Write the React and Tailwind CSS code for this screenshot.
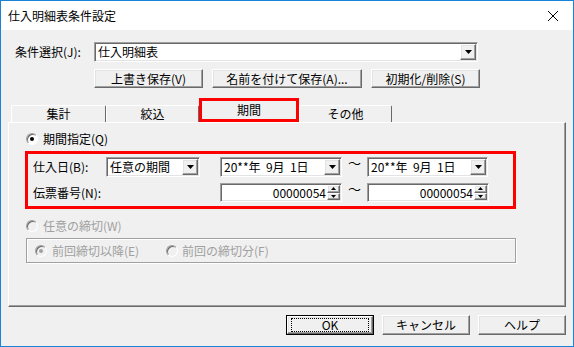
import React from 'react';

const raised = 'bg-[#f0f0f0] border border-t-white border-l-white border-r-[#696969] border-b-[#696969] shadow-[inset_-1px_-1px_0_#a0a0a0,inset_1px_1px_0_#e3e3e3]';
const sunken = 'bg-white border border-t-[#a0a0a0] border-l-[#a0a0a0] border-r-white border-b-white shadow-[inset_1px_1px_0_#696969,inset_-1px_-1px_0_#e3e3e3]';

const DownArrow = () => (
  <svg width="7" height="4" viewBox="0 0 7 4"><path d="M0 0h7L3.5 4z" fill="#000" /></svg>
);

const Combo = ({ value, className = '' }) => (
  <div className={`${sunken} flex items-center p-[1px] ${className}`}>
    <span className="flex-1 pl-[2px] whitespace-pre leading-none">{value}</span>
    <span className={`${raised} w-[16px] h-full flex items-center justify-center`}>
      <DownArrow />
    </span>
  </div>
);

const Spin = ({ value }) => (
  <div className={`${sunken} flex items-stretch p-[1px] w-[122px] h-[19px]`}>
    <span className="flex-1 text-right pr-[1px] leading-[15px]">{value}</span>
    <span className="w-[13px] flex flex-col">
      <span className={`${raised} flex-1 flex items-center justify-center`}>
        <svg width="5" height="3" viewBox="0 0 5 3"><path d="M2.5 0L5 3H0z" fill="#000" /></svg>
      </span>
      <span className={`${raised} flex-1 flex items-center justify-center`}>
        <svg width="5" height="3" viewBox="0 0 5 3"><path d="M0 0h5L2.5 3z" fill="#000" /></svg>
      </span>
    </span>
  </div>
);

const Radio = ({ checked, disabled }) => (
  <span className={`w-[12px] h-[12px] rounded-full flex items-center justify-center border border-t-[#a0a0a0] border-l-[#a0a0a0] border-r-white border-b-white shadow-[inset_1px_1px_0_#696969] ${disabled ? 'bg-[#f0f0f0]' : 'bg-white'}`}>
    {checked && <span className={`w-[4px] h-[4px] rounded-full ${disabled ? 'bg-[#a0a0a0]' : 'bg-black'}`} />}
  </span>
);

const Button = ({ children, className = '' }) => (
  <div className={`${raised} flex items-center justify-center leading-none ${className}`}>{children}</div>
);

const Tab = ({ children, className = '' }) => (
  <div className={`h-[17px] border-t border-l border-r border-t-white border-l-white border-r-[#696969] rounded-t-[2px] flex items-center justify-center leading-none ${className}`}>
    {children}
  </div>
);

export default function App() {
  return (
    <div className="w-[574px] h-[347px] flex flex-col border border-[#1883d7] bg-[#f0f0f0] text-[12px] text-black font-['Noto_Sans_CJK_JP','Noto_Sans',sans-serif] overflow-hidden">
      {/* title bar */}
      <div className="h-[29px] bg-white flex items-center justify-between pl-[7px] pr-[15px]">
        <span className="leading-none">仕入明細表条件設定</span>
        <svg width="10" height="10" viewBox="0 0 10 10"><path d="M0 0L10 10M10 0L0 10" stroke="#000" strokeWidth="1" /></svg>
      </div>

      <div className="flex-1 flex flex-col">
        {/* condition select */}
        <div className="flex items-center mt-[12px] pl-[14px]">
          <span className="w-[79px] leading-none">条件選択(J):</span>
          <Combo value="仕入明細表" className="w-[384px] h-[20px]" />
        </div>

        <div className="flex mt-[7px] ml-[93px] gap-[9px] h-[19px]">
          <Button className="w-[109px]">上書き保存(V)</Button>
          <Button className="w-[150px]">名前を付けて保存(A)...</Button>
          <Button className="w-[109px]">初期化/削除(S)</Button>
        </div>

        {/* tabs */}
        <div className="flex items-end mt-[10px] ml-[10px] h-[24px]">
          <Tab className="w-[95px]">集計</Tab>
          <Tab className="w-[93px]">絞込</Tab>
          <div className="w-[100px] h-[24px] border-[3px] border-[#ff0000] flex items-center justify-center leading-none">期間</div>
          <Tab className="w-[93px]">その他</Tab>
        </div>

        {/* panel */}
        <div className="ml-[7px] w-[558px] h-[185px] border border-t-white border-l-white border-r-[#696969] border-b-[#696969] shadow-[inset_-1px_-1px_0_#a0a0a0] flex flex-col">
          <div className="flex items-center mt-[9px] pl-[17px] gap-[5px] h-[14px]">
            <Radio checked />
            <span className="leading-none">期間指定(Q)</span>
          </div>

          <div className="ml-[16px] mt-[5px] w-[491px] h-[58px] border-[3px] border-[#ff0000] flex flex-col pl-[5px] pt-[3px]">
            <div className="flex items-center h-[20px]">
              <span className="w-[73px] leading-none">仕入日(B):</span>
              <Combo value="任意の期間" className="w-[94px] h-[20px]" />
              <Combo value="20**年  9月  1日" className="ml-[20px] w-[122px] h-[20px]" />
              <span className="w-[25px] text-center self-start leading-[12px] text-[13px]">～</span>
              <Combo value="20**年  9月  1日" className="w-[121px] h-[20px]" />
            </div>
            <div className="flex items-center h-[19px] mt-[6px]">
              <span className="w-[187px] leading-none">伝票番号(N):</span>
              <Spin value="00000054" />
              <span className="w-[25px] text-center self-start leading-[12px] text-[13px]">～</span>
              <Spin value="00000054" />
            </div>
          </div>

          <div className="flex items-center mt-[10px] pl-[17px] gap-[5px] h-[14px] text-[#a0a0a0]">
            <Radio disabled />
            <span className="leading-none">任意の締切(W)</span>
          </div>

          <div className="ml-[17px] mt-[5px] w-[490px] h-[25px] border border-[#a0a0a0] shadow-[inset_1px_1px_0_#fff,1px_1px_0_#fff] flex items-center pl-[8px] text-[#a0a0a0]">
            <Radio checked disabled />
            <span className="ml-[5px] w-[114px] leading-none">前回締切以降(E)</span>
            <Radio disabled />
            <span className="ml-[4px] leading-none">前回の締切分(F)</span>
          </div>
        </div>

        {/* dialog buttons */}
        <div className="flex justify-end gap-[8px] pr-[7px] mt-[8px]">
          <div className="w-[88px] h-[20px] border border-black">
            <Button className="w-full h-full">
              <span className="w-[78px] h-[14px] border border-dotted border-black flex items-center justify-center">OK</span>
            </Button>
          </div>
          <Button className="w-[88px] h-[20px]">キャンセル</Button>
          <Button className="w-[88px] h-[20px]">ヘルプ</Button>
        </div>
      </div>
    </div>
  );
}
